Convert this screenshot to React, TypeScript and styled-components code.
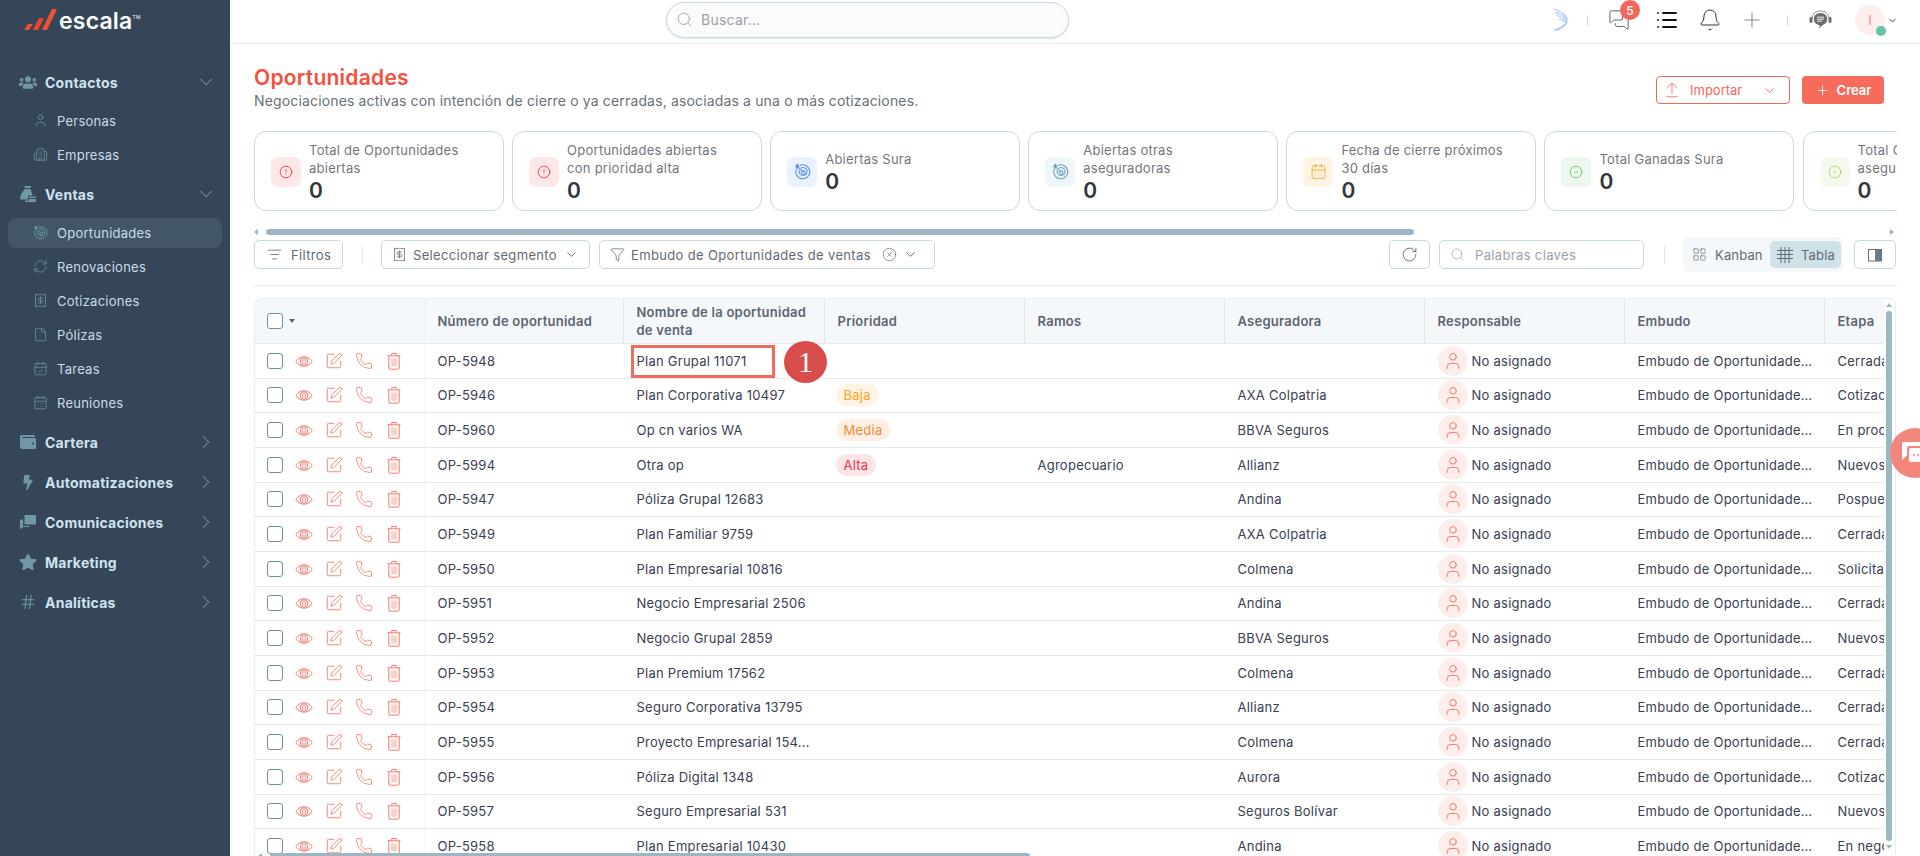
import React, { ReactNode } from 'react';
import styled, { createGlobalStyle } from 'styled-components';
import {
  ArrowUpFromLine, Bell, Building2, CalendarCheck, CalendarDays, ChevronDown, ChevronRight, CircleAlert, CircleCheck,
  CircleX, File, Filter, Hash, LayoutGrid, List, ListFilter, MessagesSquare, Phone, Plus,
  Receipt, RefreshCw, RotateCw, Search, SquarePen, User,
} from 'lucide-react';
import { FaBolt, FaStar, FaUsers, FaWallet } from 'react-icons/fa';

const GlobalStyle = createGlobalStyle`
  html, body { margin: 0; padding: 0; height: 100%; overflow: hidden; background: #fff; }
  body { font-family: Inter, "Open Sans", sans-serif; letter-spacing: 0.25px; }
  * { box-sizing: border-box; }
`;

const Shell = styled.div`
  display: flex;
  width: 1920px;
  height: 856px;
  overflow: hidden;
`;

/* sidebar */
const Sidebar = styled.aside`
  flex: 0 0 230px;
  background: #344658;
  color: #cfe3ef;
`;

const LogoRow = styled.div`
  height: 62px;
  padding: 9px 0 0 24px;
  display: flex;
  align-items: flex-start;
  gap: 1px;
`;

const LogoText = styled.span`
  color: #fff;
  font-size: 23px;
  line-height: 24px;
  font-weight: 600;
  letter-spacing: 0.2px;
  sup { font-size: 5px; font-weight: 400; vertical-align: 10px; line-height: 0; }
`;

const NavGroup = styled.div`
  height: 40px;
  padding: 0 13px 0 19px;
  display: flex;
  align-items: center;
  font-size: 14px;
  font-weight: 700;
  color: #cfe3ef;
  svg:first-child { color: #7198a6; flex: 0 0 18px; margin-right: 8px; }
  span { flex: 1; }
  svg:last-child { color: #7a95a3; }
`;

const NavSubList = styled.div`
  display: flex;
  flex-direction: column;
  gap: 4px;
  padding: 3.5px 0 4.5px;
`;

const NavSub = styled.div<{ $active?: boolean }>`
  height: 30px;
  margin: 0 8px;
  padding-left: 25px;
  border-radius: 8px;
  display: flex;
  align-items: center;
  gap: 9px;
  font-size: 13px;
  color: #c9dde9;
  background: ${({ $active }) => ($active ? '#425666' : 'transparent')};
  svg { color: #7198a6; flex: 0 0 15px; }
`;

/* top bar */
const Main = styled.main`
  flex: 1;
  min-width: 0;
  display: flex;
  flex-direction: column;
`;

const TopBar = styled.header`
  flex: 0 0 44px;
  border-bottom: 1px solid #e6eff0;
  display: flex;
  align-items: center;
  padding: 0 22px 0 436px;
`;

const SearchBox = styled.div`
  width: 403px;
  height: 36px;
  margin-top: -4px;
  border: 1px solid #c5d7e3;
  border-radius: 18px;
  background: #fafbfb;
  box-shadow: 0 1px 2px rgba(120, 150, 170, 0.25);
  display: flex;
  align-items: center;
  gap: 8px;
  padding-left: 9px;
  font-size: 14px;
  color: #9aa1a8;
  svg { color: #9aa1a8; }
`;

const TopIcons = styled.div`
  margin-left: auto;
  margin-top: -3px;
  display: flex;
  align-items: center;
  color: #555;
`;

const TopIconSlot = styled.div<{ $w: number; $ml?: number }>`
  position: relative;
  width: ${({ $w }) => $w}px;
  margin-left: ${({ $ml }) => $ml ?? 0}px;
  display: flex;
  justify-content: center;
  align-items: center;
`;

const TopDivider = styled.div<{ $ml: number }>`
  width: 1px;
  height: 11px;
  margin-left: ${({ $ml }) => $ml}px;
  background: #e3d5d8;
`;

const CountBadge = styled.span`
  position: absolute;
  top: -9px;
  right: -9px;
  width: 20px;
  height: 20px;
  border-radius: 50%;
  background: #f4685a;
  color: #fff;
  font-size: 12px;
  font-weight: 500;
  display: flex;
  align-items: center;
  justify-content: center;
`;

const Avatar = styled.div`
  position: relative;
  width: 30px;
  height: 30px;
  border-radius: 50%;
  background: #fdeeec;
  display: flex;
  align-items: center;
  justify-content: center;
  color: #f4877c;
  font-size: 13px;
`;

const StatusDot = styled.span`
  position: absolute;
  right: -1px;
  bottom: -1px;
  width: 10px;
  height: 10px;
  border-radius: 50%;
  background: #63c3a8;
`;

/* page head */
const Content = styled.div`
  flex: 1;
  min-height: 0;
  padding: 0 23px 0 24px;
  display: flex;
  flex-direction: column;
`;

const PageHead = styled.div`
  height: 87px;
  display: flex;
  justify-content: space-between;
  padding-top: 21px;
`;

const Title = styled.h1`
  margin: 0;
  font-size: 21px;
  line-height: 26px;
  font-weight: 600;
  color: #f4503b;
`;

const Subtitle = styled.p`
  margin: 0;
  font-size: 14px;
  line-height: 20px;
  letter-spacing: 0.15px;
  color: #687079;
`;

const HeadActions = styled.div`
  display: flex;
  gap: 12px;
  padding: 11px 13px 0 0;
`;

const OutlineAction = styled.button`
  width: 134px;
  height: 28px;
  border: 1px solid #f4685a;
  border-radius: 4px;
  background: #fff;
  color: #f4685a;
  font: inherit;
  font-size: 13px;
  display: flex;
  align-items: center;
  gap: 9px;
  padding: 0 12px 0 6px;
  svg:last-child { margin-left: auto; }
`;

const FilledAction = styled.button`
  width: 82px;
  height: 28px;
  border: 0;
  border-radius: 4px;
  background: #f56c5c;
  color: #fff;
  font: inherit;
  font-size: 13px;
  font-weight: 600;
  display: flex;
  align-items: center;
  justify-content: center;
  gap: 7px;
`;

/* cards */
const CardRow = styled.div`
  flex: 0 0 80px;
  display: flex;
  gap: 8.6px;
  overflow: hidden;
`;

const Card = styled.div`
  flex: 0 0 249.5px;
  height: 80px;
  border: 1px solid #c5d8e4;
  border-radius: 12px;
  padding: 1px 8px 0 16px;
  display: flex;
  align-items: center;
  gap: 8px;
`;

const CardIcon = styled.div<{ $bg: string; $fg: string }>`
  flex: 0 0 30px;
  height: 30px;
  border-radius: 7px;
  background: ${({ $bg }) => $bg};
  color: ${({ $fg }) => $fg};
  display: flex;
  align-items: center;
  justify-content: center;
`;

const CardLabel = styled.div`
  font-size: 13px;
  line-height: 18px;
  color: #73767d;
`;

const CardValue = styled.div`
  margin-top: 1px;
  font-size: 21px;
  line-height: 25px;
  font-weight: 600;
  color: #33363b;
`;

const HScroll = styled.div`
  flex: 0 0 6px;
  margin-top: 18px;
  display: flex;
  align-items: center;
`;

const ScrollThumb = styled.div<{ $w: number }>`
  width: ${({ $w }) => $w}px;
  height: 6px;
  margin-left: 8px;
  border-radius: 3px;
  background: #9db6c4;
`;

const ScrollArrow = styled.span<{ $dir: 'left' | 'right' | 'up' | 'down' }>`
  width: 0;
  height: 0;
  border: 3px solid transparent;
  ${({ $dir }) => {
    if ($dir === 'left') return 'border-left-width: 0; border-right: 4px solid #9db6c4;';
    if ($dir === 'right') return 'border-right-width: 0; border-left: 4px solid #9db6c4; margin-left: auto; margin-right: 3px;';
    if ($dir === 'up') return 'border-top-width: 0; border-bottom: 4px solid #9db6c4;';
    return 'border-bottom-width: 0; border-top: 4px solid #9db6c4; margin-top: 4px;';
  }}
`;

/* toolbar */
const Toolbar = styled.div`
  flex: 0 0 29px;
  min-height: 0;
  height: 29px;
  margin-top: 5px;
  display: flex;
  align-items: center;
  font-size: 13px;
  letter-spacing: 0.35px;
  color: #5f6b75;
`;

const ToolButton = styled.div<{ $w: number; $ml?: number; $pr?: number }>`
  width: ${({ $w }) => $w}px;
  margin-left: ${({ $ml }) => $ml ?? 0}px;
  height: 29px;
  border: 1px solid #c5d8e4;
  border-radius: 5px;
  background: #fff;
  display: flex;
  align-items: center;
  gap: 6px;
  padding: 0 ${({ $pr }) => $pr ?? 10}px 0 10px;
  white-space: nowrap;
  svg { flex: none; color: #4f5a64; }
`;

const IconButton = styled(ToolButton)`
  justify-content: center;
  padding: 0;
`;

const FilterButton = styled(ToolButton)`
  gap: 9px;
  padding-left: 12px;
`;

const ToolLabel = styled.span`
  flex: 1;
`;

const ToolDivider = styled.div<{ $ml: number; $mr: number }>`
  width: 1px;
  height: 17px;
  margin: 0 ${({ $mr }) => $mr}px 0 ${({ $ml }) => $ml}px;
  background: #dfe3e4;
`;

const KeywordBox = styled(ToolButton)`
  gap: 10px;
  padding-left: 10px;
  color: #9aa1a8;
  svg { color: #9aa1a8; }
`;

const ViewSwitch = styled.div`
  flex: 0 0 160px;
  height: 35px;
  margin-right: 11px;
  border-radius: 6px;
  background: #f5f8fa;
  display: flex;
  align-items: center;
  padding: 0 2px 0 9px;
`;

const ViewOption = styled.div<{ $active?: boolean }>`
  height: 27px;
  border-radius: 5px;
  display: flex;
  align-items: center;
  gap: ${({ $active }) => ($active ? '7px' : '8px')};
  font-size: 13px;
  letter-spacing: 0.15px;
  width: ${({ $active }) => ($active ? '71px' : '78px')};
  padding-left: ${({ $active }) => ($active ? '6px' : '0')};
  background: ${({ $active }) => ($active ? '#cfe2e8' : 'transparent')};
  svg { color: #5f6b75; flex: none; }
`;

const Rule = styled.div`
  flex: 0 0 1px;
  margin-top: 16px;
  background: #e6eff0;
`;

/* table */
const TableFrame = styled.div`
  position: relative;
  flex: 1;
  min-height: 0;
  margin: 12px 1px 0 0;
  border: 1px solid #e6eef2;
  border-bottom: 0;
  border-radius: 8px 8px 0 0;
  display: flex;
  overflow: hidden;
`;

const TableViewport = styled.div`
  flex: 1;
  min-width: 0;
  overflow: hidden;
`;

const GRID = '170px 199px 201px 200px 200px 200px 200px 200px 61px';

const HeaderRow = styled.div`
  display: grid;
  grid-template-columns: ${GRID};
  height: 45px;
  background: #f4f8fb;
  border-bottom: 1px solid #e6e9ec;
`;

const HeaderCell = styled.div`
  display: flex;
  align-items: center;
  padding: 0 12.5px;
  font-size: 13px;
  line-height: 18px;
  font-weight: 600;
  color: #5e6470;
  border-right: 1px solid #e2e6e8;
  &:first-child { border-right-color: #eef1f3; padding-left: 12px; gap: 6px; }
  &:last-child { border-right: 0; }
`;

const BodyRow = styled.div`
  display: grid;
  grid-template-columns: ${GRID};
  height: 34.67px;
  border-bottom: 1px solid #e6e9ec;
`;

const Cell = styled.div`
  position: relative;
  display: flex;
  align-items: center;
  padding: 0 12.5px;
  min-width: 0;
  font-size: 13px;
  color: #3a4050;
  white-space: nowrap;
  &:first-child { border-right: 1px solid #f3f5f7; padding-left: 12px; }
  &:last-child { overflow: hidden; padding-right: 0; }
`;

const CheckBox = styled.span`
  flex: 0 0 16px;
  height: 16px;
  border: 1px solid #6f93a3;
  border-radius: 3px;
  background: #fff;
`;

const SortCaret = styled.span`
  width: 0;
  height: 0;
  border: 3.5px solid transparent;
  border-bottom-width: 0;
  border-top: 4px solid #5e6470;
`;

const RowActions = styled.div`
  display: flex;
  align-items: center;
  gap: 12px;
  margin-left: 12px;
  color: #f4786b;
  svg { flex: none; }
`;

const PriorityBadge = styled.span<{ $bg: string; $fg: string }>`
  height: 22px;
  margin-left: -2px;
  padding: 0 8px;
  border-radius: 11px;
  background: ${({ $bg }) => $bg};
  color: ${({ $fg }) => $fg};
  display: inline-flex;
  align-items: center;
`;

const OwnerIcon = styled.span`
  flex: 0 0 30px;
  height: 30px;
  margin-right: 4px;
  border-radius: 50%;
  background: #fdeeec;
  color: #f4786b;
  display: flex;
  align-items: center;
  justify-content: center;
`;

const HighlightBox = styled.div`
  position: absolute;
  left: 7px;
  top: 1px;
  width: 144px;
  height: 33px;
  border: 3px solid #ee6b5e;
`;

const StepBadge = styled.div`
  position: absolute;
  left: 160px;
  top: -3px;
  width: 43px;
  height: 42px;
  border-radius: 50%;
  background: #d94c4c;
  color: #fff;
  font-family: "Liberation Serif", serif;
  font-size: 30px;
  display: flex;
  align-items: center;
  justify-content: center;
  z-index: 2;
`;

const VScroll = styled.div`
  flex: 0 0 10px;
  display: flex;
  flex-direction: column;
  align-items: center;
  padding-top: 4px;
  margin-right: 1px;
`;

const VThumb = styled.div`
  width: 6px;
  height: 530px;
  margin-top: 4px;
  border-radius: 3px;
  background: #9db6c4;
`;

const BottomScroll = styled.div`
  position: absolute;
  left: 3px;
  bottom: -3px;
  display: flex;
  align-items: center;
  height: 6px;
`;

const ChatBubble = styled.div`
  position: fixed;
  left: 1890px;
  top: 428px;
  width: 50px;
  height: 50px;
  border-radius: 50%;
  background: #f4877c;
  color: #fff;
  display: flex;
  align-items: center;
  padding-left: 11px;
  z-index: 5;
`;

/* drawings */
const SlashLogo = () => (
  <svg width="34" height="22" viewBox="0 0 34 22">
    <path d="M0 21 L4 15 H9 L5 21 Z" fill="#f04e30" />
    <path d="M9 21 L15 9 H20 L14 21 Z" fill="#e8452c" />
    <path d="M18 21 L28 0 H33 L23 21 Z" fill="#f0522f" />
  </svg>
);

const RadarIcon = ({ size = 16 }: { size?: number }) => (
  <svg width={size} height={size} viewBox="0 0 16 16" fill="none" stroke="currentColor" strokeWidth="1">
    <path d="M5 2.5A6.6 6.6 0 1 1 2.4 5.2" />
    <path d="M6.2 5A3.8 3.8 0 1 1 5 6.6" />
    <circle cx="8.8" cy="9" r="1.6" />
    <path d="M8.5 8.7L3 3.2" />
    <path d="M1.6 3.2L3.4 1.2L4.2 3.4L3.2 4.6Z" fill="currentColor" />
  </svg>
);

const SalesIcon = () => (
  <svg width="18" height="18" viewBox="0 0 18 18" fill="currentColor">
    <path d="M5.5 1H12V3H5.5Z" />
    <path d="M6 4H11.6L13.6 10.5H9V14.5H1.2C1 9.5 3.6 6.8 6 4Z" />
    <path d="M10 11.5H17V13H10ZM10 14H17V15.5H10ZM6 15.5H17V17H6Z" />
  </svg>
);

const BubblesIcon = () => (
  <svg width="17" height="16" viewBox="0 0 17 16" fill="currentColor">
    <path d="M5 1H16.5V10.5H8L5 10.5Z" />
    <path d="M0.5 5.5H3.5V12H10V13H3.5L0.5 15.5Z" />
  </svg>
);

const WingIcon = () => (
  <svg width="18" height="24" viewBox="0 0 18 24" fill="none" stroke="#a9c5f5" strokeWidth="1.3">
    <path d="M2 1C8 3 13 6 15 10" />
    <path d="M3 4C8 6 12 8 15.5 12" />
    <path d="M5 7.5C9 9 13 11 15.5 13.5" />
    <path d="M7 11C10 12 13 13 15 15" />
    <path d="M14 16C11 19 7 21 2 22" />
    <path d="M15 14C12 18 9 20 5 22.5" />
  </svg>
);

const SupportIcon = () => (
  <svg width="23" height="21" viewBox="0 0 23 21" fill="#6d6d6d">
    <path d="M3 8.5C3 4 7 1 11.5 1S20 4 20 8.5" fill="none" stroke="#8a8a8a" strokeWidth="1" />
    <rect x="0.5" y="7" width="3" height="6" rx="1.4" />
    <rect x="19.5" y="7" width="3" height="6" rx="1.4" />
    <path d="M11.5 3C7.5 3 4.8 5.6 4.8 9S7.5 15 11 15L9.5 18.5L14.5 14.6C16.8 13.8 18.2 11.7 18.2 9C18.2 5.6 15.5 3 11.5 3Z" />
    <path d="M8 7.2H15M8 9.2H15M8 11.2H13" stroke="#fff" strokeWidth="0.9" />
  </svg>
);

const ChatGlyph = () => (
  <svg width="28" height="24" viewBox="0 0 28 24" fill="currentColor">
    <path d="M2 1H19V5H8C6.5 5 6 6 6 7V15H5L1 19V2Z" />
    <rect x="8" y="7" width="20" height="14" rx="2" />
    <circle cx="13" cy="14" r="1" fill="#f4877c" />
    <circle cx="17" cy="14" r="1" fill="#f4877c" />
    <circle cx="21" cy="14" r="1" fill="#f4877c" />
  </svg>
);

const EyeIcon = () => (
  <svg width="18" height="18" viewBox="0 0 18 18" fill="none" stroke="currentColor" strokeWidth="1">
    <path d="M1 9.5C3 6.3 5.8 4.8 9 4.8S15 6.3 17 9.5C15 12.7 12.2 14.2 9 14.2S3 12.7 1 9.5Z" />
    <circle cx="9" cy="9.5" r="3.8" />
    <circle cx="9" cy="9.5" r="1.9" strokeWidth="0.8" />
  </svg>
);

const TrashIcon = () => (
  <svg width="18" height="18" viewBox="0 0 18 18" fill="none" stroke="currentColor" strokeWidth="1">
    <path d="M2.5 3.8H15.5M6.8 3.6V1.4H11.2V3.6" />
    <path d="M3.8 3.8V16.2C3.8 16.8 4.2 17.2 4.8 17.2H13.2C13.8 17.2 14.2 16.8 14.2 16.2V3.8" />
    <path d="M7 6.5V14.5M9 6.5V14.5M11 6.5V14.5" strokeOpacity="0.7" />
  </svg>
);

const GridTableIcon = () => (
  <svg width="18" height="18" viewBox="0 0 18 18" fill="none" stroke="currentColor" strokeWidth="1">
    <path d="M1 4.5H17M1 8.5H17M1 12.5H17M5 1V17M9 1V17M13 1V17" />
  </svg>
);

const ColumnsIcon = () => (
  <svg width="16" height="16" viewBox="0 0 16 16">
    <rect x="1.5" y="2.5" width="13" height="11.5" fill="none" stroke="#5f6b75" strokeWidth="1" />
    <rect x="8" y="2.5" width="6.5" height="11.5" fill="#6d7a84" />
  </svg>
);

/* data */
const contactSubs: [ReactNode, string][] = [
  [<User size={15} strokeWidth={1.2} />, 'Personas'],
  [<Building2 size={15} strokeWidth={1.2} />, 'Empresas'],
];

const salesSubs: [ReactNode, string, boolean?][] = [
  [<RadarIcon size={15} />, 'Oportunidades', true],
  [<RefreshCw size={15} strokeWidth={1.2} />, 'Renovaciones'],
  [<Receipt size={15} strokeWidth={1.2} />, 'Cotizaciones'],
  [<File size={15} strokeWidth={1.2} />, 'Pólizas'],
  [<CalendarCheck size={15} strokeWidth={1.2} />, 'Tareas'],
  [<CalendarDays size={15} strokeWidth={1.2} />, 'Reuniones'],
];

const closedGroups: [ReactNode, string][] = [
  [<FaWallet size={16} />, 'Cartera'],
  [<FaBolt size={15} />, 'Automatizaciones'],
  [<BubblesIcon />, 'Comunicaciones'],
  [<FaStar size={16} />, 'Marketing'],
  [<Hash size={18} strokeWidth={1.5} />, 'Analíticas'],
];

const cards: { label: ReactNode; bg: string; fg: string; icon: ReactNode }[] = [
  { label: <>Total de Oportunidades<br />abiertas</>, bg: '#fde7e7', fg: '#ef3f4a', icon: <CircleAlert size={14} strokeWidth={1.6} /> },
  { label: <>Oportunidades abiertas<br />con prioridad alta</>, bg: '#fde7e7', fg: '#ef3f4a', icon: <CircleAlert size={14} strokeWidth={1.6} /> },
  { label: 'Abiertas Sura', bg: '#eaf2fe', fg: '#5b8def', icon: <RadarIcon size={17} /> },
  { label: <>Abiertas otras<br />aseguradoras</>, bg: '#eef6f8', fg: '#6aa4b8', icon: <RadarIcon size={17} /> },
  { label: <>Fecha de cierre próximos<br />30 días</>, bg: '#fff3e3', fg: '#f5a623', icon: <CalendarDays size={17} strokeWidth={1.2} /> },
  { label: 'Total Ganadas Sura', bg: '#edf7ed', fg: '#5cb85c', icon: <CircleCheck size={14} strokeWidth={1.3} /> },
  { label: <>Total Ganadas otras<br />aseguradoras</>, bg: '#f3f9ec', fg: '#9ccc65', icon: <CircleCheck size={14} strokeWidth={1.3} /> },
];

const columns = ['Número de oportunidad', 'Nombre de la oportunidad de venta', 'Prioridad', 'Ramos', 'Aseguradora', 'Responsable', 'Embudo', 'Etapa'];

const priorityStyles: Record<string, { bg: string; fg: string }> = {
  Baja: { bg: '#fff3e3', fg: '#f5a623' },
  Media: { bg: '#fff0e3', fg: '#f58a2e' },
  Alta: { bg: '#fde4e6', fg: '#ef3346' },
};

const rows = [
  ['OP-5948', 'Plan Grupal 11071', '', '', '', 'Cerrada ganada'],
  ['OP-5946', 'Plan Corporativa 10497', 'Baja', '', 'AXA Colpatria', 'Cotización'],
  ['OP-5960', 'Op cn varios WA', 'Media', '', 'BBVA Seguros', 'En proceso'],
  ['OP-5994', 'Otra op', 'Alta', 'Agropecuario', 'Allianz', 'Nuevos negocios'],
  ['OP-5947', 'Póliza Grupal 12683', '', '', 'Andina', 'Pospuesta'],
  ['OP-5949', 'Plan Familiar 9759', '', '', 'AXA Colpatria', 'Cerrada ganada'],
  ['OP-5950', 'Plan Empresarial 10816', '', '', 'Colmena', 'Solicitada'],
  ['OP-5951', 'Negocio Empresarial 2506', '', '', 'Andina', 'Cerrada ganada'],
  ['OP-5952', 'Negocio Grupal 2859', '', '', 'BBVA Seguros', 'Nuevos negocios'],
  ['OP-5953', 'Plan Premium 17562', '', '', 'Colmena', 'Cerrada ganada'],
  ['OP-5954', 'Seguro Corporativa 13795', '', '', 'Allianz', 'Cerrada ganada'],
  ['OP-5955', 'Proyecto Empresarial 154...', '', '', 'Colmena', 'Cerrada ganada'],
  ['OP-5956', 'Póliza Digital 1348', '', '', 'Aurora', 'Cotización'],
  ['OP-5957', 'Seguro Empresarial 531', '', '', 'Seguros Bolívar', 'Nuevos negocios'],
  ['OP-5958', 'Plan Empresarial 10430', '', '', 'Andina', 'En negociación'],
];

const App: React.FC = () => (
  <Shell>
    <GlobalStyle />
    <Sidebar>
      <LogoRow>
        <SlashLogo />
        <LogoText>escala<sup>TM</sup></LogoText>
      </LogoRow>
      <NavGroup><FaUsers size={17} /><span>Contactos</span><ChevronDown size={22} strokeWidth={1.1} /></NavGroup>
      <NavSubList>
        {contactSubs.map(([icon, label]) => <NavSub key={label}>{icon}{label}</NavSub>)}
      </NavSubList>
      <NavGroup><SalesIcon /><span>Ventas</span><ChevronDown size={22} strokeWidth={1.1} /></NavGroup>
      <NavSubList>
        {salesSubs.map(([icon, label, active]) => <NavSub key={label} $active={active}>{icon}{label}</NavSub>)}
      </NavSubList>
      {closedGroups.map(([icon, label]) => (
        <NavGroup key={label}>{icon}<span>{label}</span><ChevronRight size={22} strokeWidth={1.1} /></NavGroup>
      ))}
    </Sidebar>

    <Main>
      <TopBar>
        <SearchBox><Search size={17} strokeWidth={1.2} />Buscar...</SearchBox>
        <TopIcons>
          <TopIconSlot $w={18}><WingIcon /></TopIconSlot>
          <TopDivider $ml={17} />
          <TopIconSlot $w={24} $ml={19}>
            <MessagesSquare size={22} strokeWidth={1} />
            <CountBadge>5</CountBadge>
          </TopIconSlot>
          <TopIconSlot $w={24} $ml={24}><List size={24} strokeWidth={1.8} color="#111" /></TopIconSlot>
          <TopIconSlot $w={24} $ml={19}><Bell size={24} strokeWidth={1} color="#333" /></TopIconSlot>
          <TopIconSlot $w={24} $ml={18}><Plus size={26} strokeWidth={1.1} color="#8b8b8b" /></TopIconSlot>
          <TopDivider $ml={23} />
          <TopIconSlot $w={24} $ml={20}><SupportIcon /></TopIconSlot>
          <TopIconSlot $w={30} $ml={23}>
            <Avatar>I<StatusDot /></Avatar>
          </TopIconSlot>
          <TopIconSlot $w={11} $ml={2}><ChevronDown size={11} strokeWidth={2} color="#333" /></TopIconSlot>
        </TopIcons>
      </TopBar>

      <Content>
        <PageHead>
          <div>
            <Title>Oportunidades</Title>
            <Subtitle>Negociaciones activas con intención de cierre o ya cerradas, asociadas a una o más cotizaciones.</Subtitle>
          </div>
          <HeadActions>
            <OutlineAction><ArrowUpFromLine size={18} strokeWidth={1.1} />Importar<ChevronDown size={15} strokeWidth={1.5} /></OutlineAction>
            <FilledAction><Plus size={15} strokeWidth={1.3} />Crear</FilledAction>
          </HeadActions>
        </PageHead>

        <CardRow>
          {cards.map((c, i) => (
            <Card key={i}>
              <CardIcon $bg={c.bg} $fg={c.fg}>{c.icon}</CardIcon>
              <div>
                <CardLabel>{c.label}</CardLabel>
                <CardValue>0</CardValue>
              </div>
            </Card>
          ))}
        </CardRow>

        <HScroll>
          <ScrollArrow $dir="left" />
          <ScrollThumb $w={1148} />
          <ScrollArrow $dir="right" />
        </HScroll>

        <Toolbar>
          <FilterButton $w={89}><ListFilter size={15} strokeWidth={1.2} />Filtros</FilterButton>
          <ToolDivider $ml={19} $mr={18} />
          <ToolButton $w={209}><Receipt size={15} strokeWidth={1.1} /><ToolLabel>Seleccionar segmento</ToolLabel><ChevronDown size={15} strokeWidth={1.4} /></ToolButton>
          <ToolButton $w={336} $ml={9} $pr={16}><Filter size={15} strokeWidth={1.1} /><ToolLabel>Embudo de Oportunidades de ventas</ToolLabel><CircleX size={15} strokeWidth={1} /><ChevronDown size={15} strokeWidth={1.4} /></ToolButton>
          <IconButton $w={41} $ml={454}><RotateCw size={17} strokeWidth={1.1} /></IconButton>
          <KeywordBox $w={205} $ml={9}><Search size={15} strokeWidth={1.1} />Palabras claves</KeywordBox>
          <ToolDivider $ml={20} $mr={18} />
          <ViewSwitch>
            <ViewOption><LayoutGrid size={15} strokeWidth={1.1} />Kanban</ViewOption>
            <ViewOption $active><GridTableIcon />Tabla</ViewOption>
          </ViewSwitch>
          <IconButton $w={42}><ColumnsIcon /></IconButton>
        </Toolbar>

        <Rule />

        <TableFrame>
          <TableViewport>
            <HeaderRow>
              <HeaderCell><CheckBox /><SortCaret /></HeaderCell>
              {columns.map(c => <HeaderCell key={c}>{c}</HeaderCell>)}
            </HeaderRow>
            {rows.map(([num, name, prio, ramo, ins, stage], i) => (
              <BodyRow key={num}>
                <Cell>
                  <CheckBox />
                  <RowActions>
                    <EyeIcon />
                    <SquarePen size={18} strokeWidth={1.2} />
                    <Phone size={18} strokeWidth={1.1} />
                    <TrashIcon />
                  </RowActions>
                </Cell>
                <Cell>{num}</Cell>
                <Cell>
                  {name}
                  {i === 0 && <><HighlightBox /><StepBadge>1</StepBadge></>}
                </Cell>
                <Cell>{prio && <PriorityBadge $bg={priorityStyles[prio].bg} $fg={priorityStyles[prio].fg}>{prio}</PriorityBadge>}</Cell>
                <Cell>{ramo}</Cell>
                <Cell>{ins}</Cell>
                <Cell><OwnerIcon><User size={20} strokeWidth={1.2} /></OwnerIcon>No asignado</Cell>
                <Cell>Embudo de Oportunidade…</Cell>
                <Cell>{stage}</Cell>
              </BodyRow>
            ))}
          </TableViewport>
          <VScroll>
            <ScrollArrow $dir="up" />
            <VThumb />
            <ScrollArrow $dir="down" />
          </VScroll>
          <BottomScroll>
            <ScrollArrow $dir="left" />
            <ScrollThumb $w={760} />
          </BottomScroll>
        </TableFrame>
      </Content>
    </Main>
    <ChatBubble><ChatGlyph /></ChatBubble>
  </Shell>
);

export default App;
